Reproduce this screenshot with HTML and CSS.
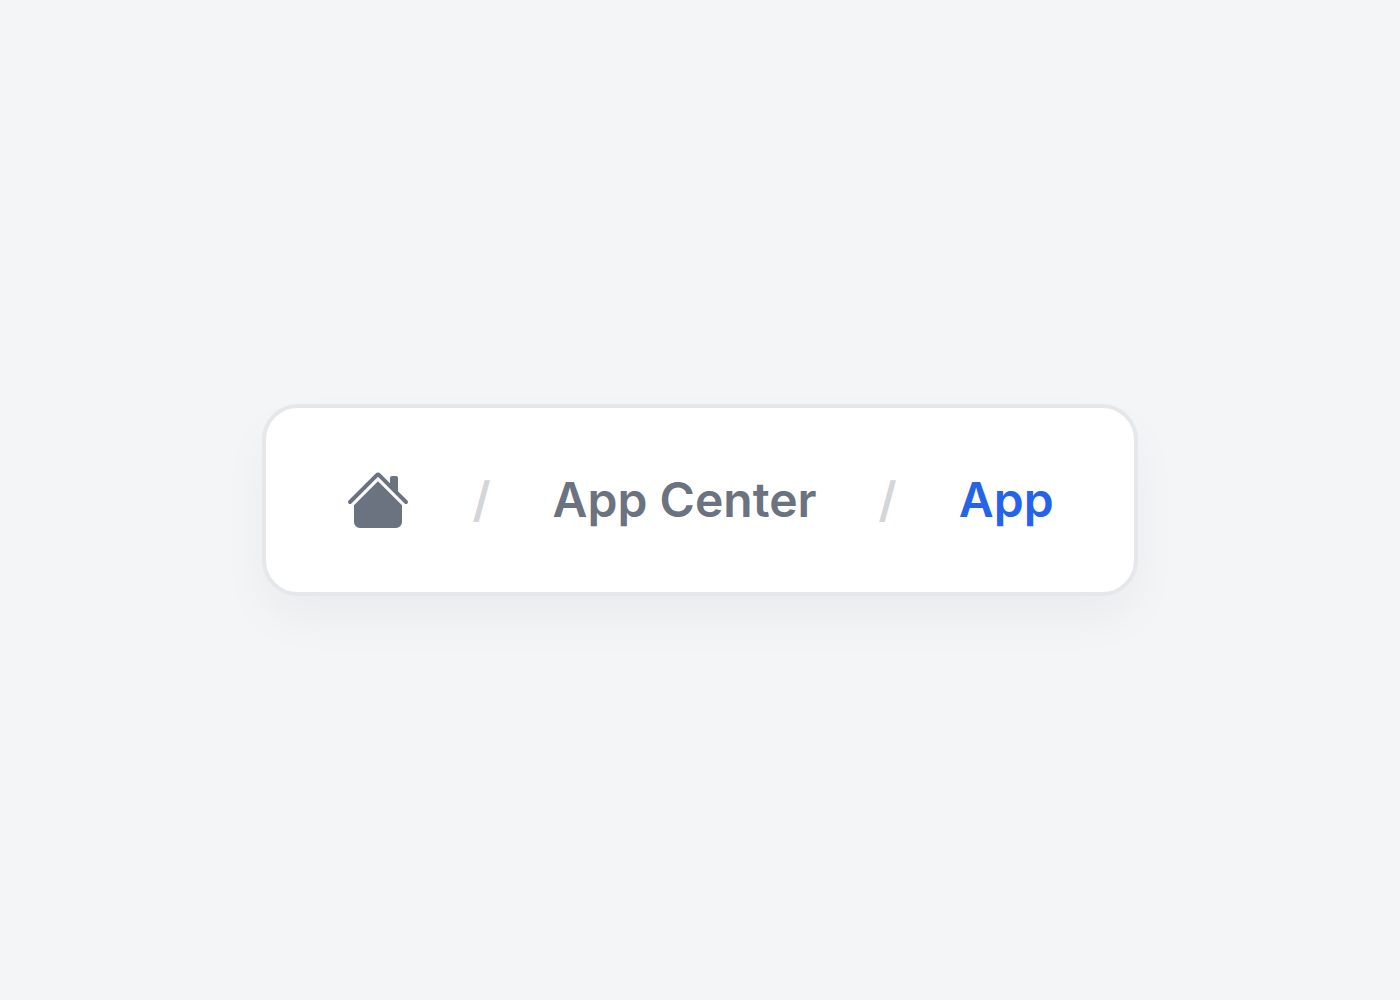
FILE: index.html
```html
<!DOCTYPE html>
<html lang="en">
<head>
  <meta charset="UTF-8">
  <meta name="viewport" content="width=device-width, initial-scale=1.0">
  <title>App - App Center</title>
  <link rel="stylesheet" href="styles.css">
</head>
<body>

  <!-- Breadcrumb -->
  <nav class="breadcrumb" aria-label="Breadcrumb">
    <ol class="breadcrumb-list">
      <li>
        <a href="#" class="home-link" aria-label="Home">
          <svg class="home-icon" viewBox="0 0 16 16" fill="currentColor" aria-hidden="true">
            <path d="M8.707 1.5a1 1 0 0 0-1.414 0L.646 8.146a.5.5 0 0 0 .708.708L8 2.207l6.646 6.647a.5.5 0 0 0 .708-.708L13 5.793V2.5a.5.5 0 0 0-.5-.5h-1a.5.5 0 0 0-.5.5v1.293z"/>
            <path d="m8 3.293 6 6V13.5a1.5 1.5 0 0 1-1.5 1.5h-9A1.5 1.5 0 0 1 2 13.5V9.293z"/>
          </svg>
        </a>
      </li>
      <li class="separator" aria-hidden="true">/</li>
      <li><a href="#">App Center</a></li>
      <li class="separator" aria-hidden="true">/</li>
      <li><a href="#" class="current" aria-current="page">App</a></li>
    </ol>
  </nav>

</body>
</html>
```

FILE: styles.css
```css
body {
  font-family: Inter, sans-serif;
  background-color: #f3f5f7;
  margin: 0;
  min-height: 100vh;
  display: flex;
  justify-content: center;
  align-items: center;
}

/* Breadcrumb Card */
.breadcrumb {
  background-color: #fff;
  border: 4px solid #e5e7ea;
  border-radius: 36px;
  padding: 56px 80px;
  box-shadow: 0 24px 48px rgba(0, 0, 0, 0.04);
}

.breadcrumb-list {
  display: flex;
  align-items: center;
  gap: 62px;
  list-style: none;
  margin: 0;
  padding: 0;
  font-size: 48px;
  font-weight: 600;
  line-height: 72px;
}

.breadcrumb a {
  color: #6b7280;
  text-decoration: none;
}

.breadcrumb .current {
  color: #2563eb;
}

.separator {
  color: #d4d5d9;
}

/* Home Icon */
.home-link {
  display: flex;
}

.home-icon {
  width: 64px;
  height: 64px;
}
```
